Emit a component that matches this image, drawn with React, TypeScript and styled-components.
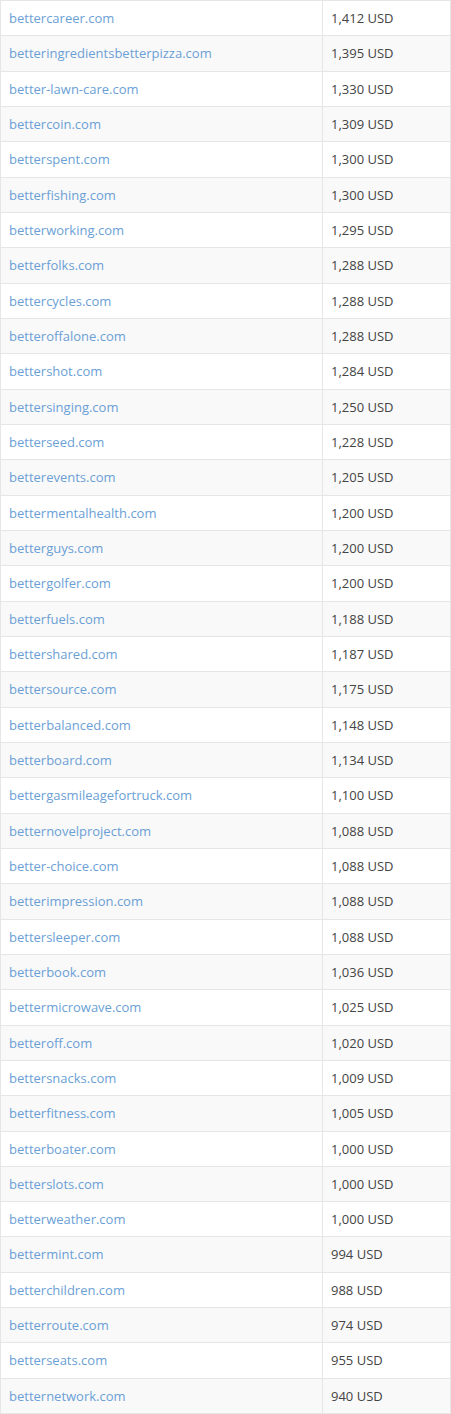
import React from "react";
import styled, { createGlobalStyle } from "styled-components";

const Global = createGlobalStyle`
  html, body { margin: 0; padding: 0; background: #fff; }
  body { font-family: "Open Sans", "Liberation Sans", sans-serif; }
`;

const rows: [string, string][] = [
  ["bettercareer.com", "1,412 USD"],
  ["betteringredientsbetterpizza.com", "1,395 USD"],
  ["better-lawn-care.com", "1,330 USD"],
  ["bettercoin.com", "1,309 USD"],
  ["betterspent.com", "1,300 USD"],
  ["betterfishing.com", "1,300 USD"],
  ["betterworking.com", "1,295 USD"],
  ["betterfolks.com", "1,288 USD"],
  ["bettercycles.com", "1,288 USD"],
  ["betteroffalone.com", "1,288 USD"],
  ["bettershot.com", "1,284 USD"],
  ["bettersinging.com", "1,250 USD"],
  ["betterseed.com", "1,228 USD"],
  ["betterevents.com", "1,205 USD"],
  ["bettermentalhealth.com", "1,200 USD"],
  ["betterguys.com", "1,200 USD"],
  ["bettergolfer.com", "1,200 USD"],
  ["betterfuels.com", "1,188 USD"],
  ["bettershared.com", "1,187 USD"],
  ["bettersource.com", "1,175 USD"],
  ["betterbalanced.com", "1,148 USD"],
  ["betterboard.com", "1,134 USD"],
  ["bettergasmileagefortruck.com", "1,100 USD"],
  ["betternovelproject.com", "1,088 USD"],
  ["better-choice.com", "1,088 USD"],
  ["betterimpression.com", "1,088 USD"],
  ["bettersleeper.com", "1,088 USD"],
  ["betterbook.com", "1,036 USD"],
  ["bettermicrowave.com", "1,025 USD"],
  ["betteroff.com", "1,020 USD"],
  ["bettersnacks.com", "1,009 USD"],
  ["betterfitness.com", "1,005 USD"],
  ["betterboater.com", "1,000 USD"],
  ["betterslots.com", "1,000 USD"],
  ["betterweather.com", "1,000 USD"],
  ["bettermint.com", "994 USD"],
  ["betterchildren.com", "988 USD"],
  ["betterroute.com", "974 USD"],
  ["betterseats.com", "955 USD"],
  ["betternetwork.com", "940 USD"],
];

const Table = styled.table`
  width: 451px;
  border-collapse: collapse;
  border-spacing: 0;
  font-size: 13px;
  color: #444;
`;

const Row = styled.tr<{ $odd: boolean }>`
  background: ${(p) => (p.$odd ? "#f9f9f9" : "#fff")};
`;

const Cell = styled.td<{ $first?: boolean }>`
  padding: 8px 8px;
  line-height: 18.33px;
  border: 1px solid #e6e6e6;
  width: ${(p) => (p.$first ? "305px" : "auto")};
  vertical-align: middle;
  white-space: nowrap;
`;

const Domain = styled.a`
  color: #6b9fd6;
  text-decoration: none;
`;

export default function App() {
  return (
    <>
      <Global />
      <Table>
        <tbody>
          {rows.map(([d, v], i) => (
            <Row key={d} $odd={i % 2 === 1}>
              <Cell $first>
                <Domain href="#">{d}</Domain>
              </Cell>
              <Cell>{v}</Cell>
            </Row>
          ))}
        </tbody>
      </Table>
    </>
  );
}
